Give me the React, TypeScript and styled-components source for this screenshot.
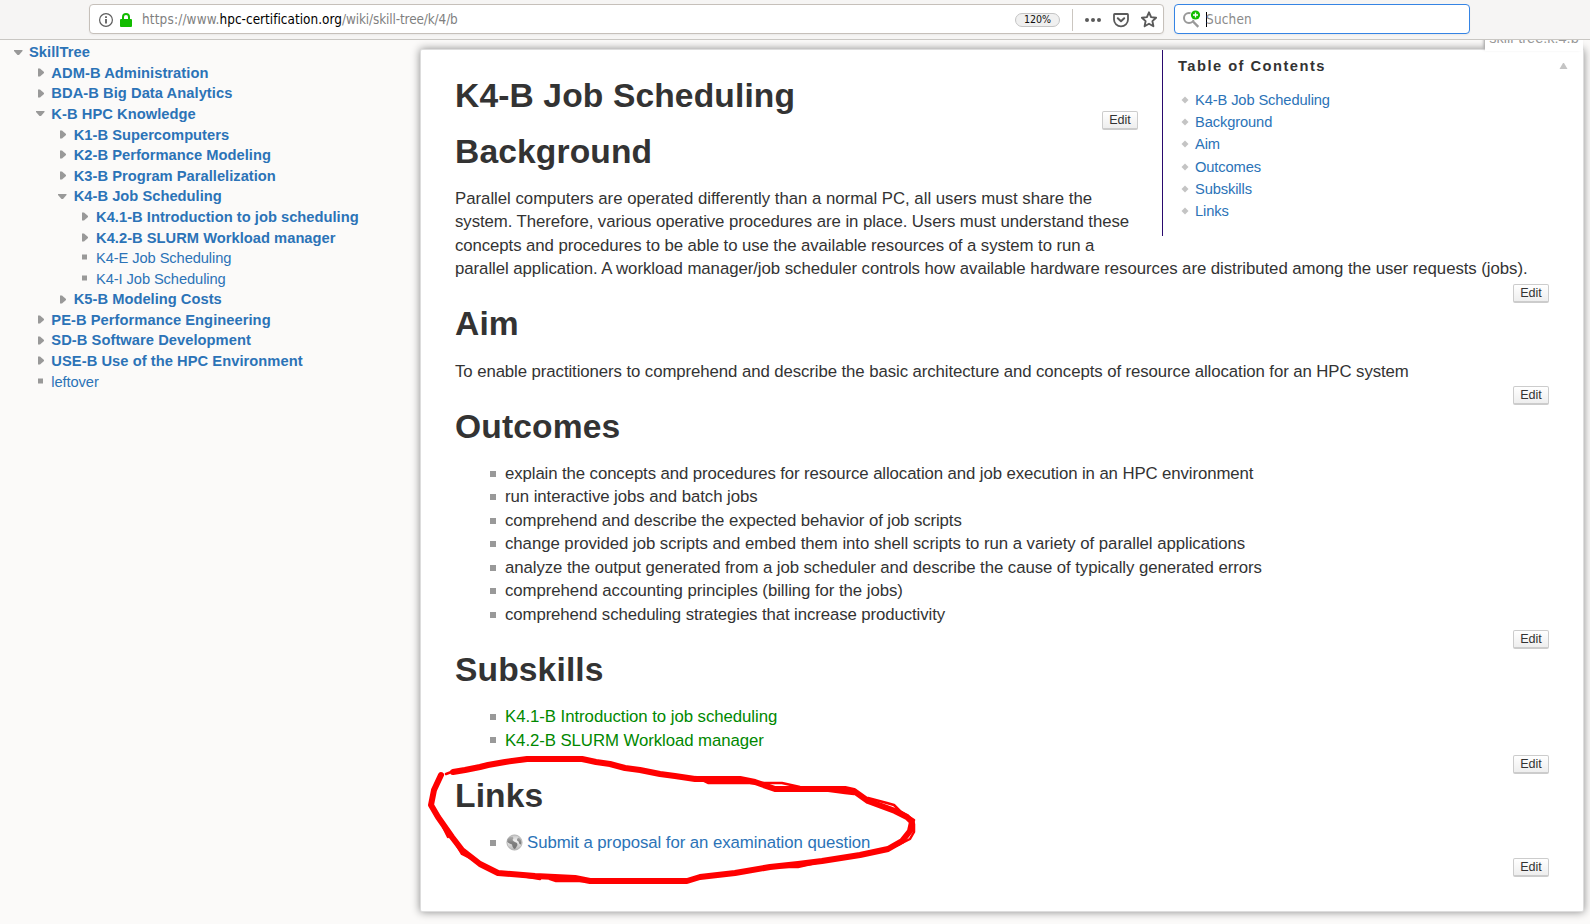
import React from 'react';
import styled, { createGlobalStyle } from 'styled-components';

const Global = createGlobalStyle`
  * { box-sizing: border-box; }
  html, body { margin: 0; height: 924px; overflow: hidden; }
  body { background: #fbfaf9; color: #333; font: 16.8px/23.52px "Liberation Sans", Arial, sans-serif; }
  ul, h1, h2, p { margin: 0; padding: 0; list-style: none; }
  a { color: #2b73b7; text-decoration: none; }
  svg { display: block; flex: none; overflow: visible; }
`;

const Page = styled.div`position: relative; width: 1590px; height: 924px; overflow: hidden;`;

const Toolbar = styled.header`
  position: relative; z-index: 2; display: flex; gap: 10px; height: 40px; padding: 4px 0 0 89px;
  background: #f6f5f4; border-bottom: 1px solid #c9c7c3;
  font: 13.45px/28px "DejaVu Sans Condensed", "DejaVu Sans", sans-serif;
`;
const Field = styled.div<{ $width: number; $focused?: boolean }>`
  display: flex; align-items: center; width: ${p => p.$width}px; height: 30px;
  border: 1px solid ${p => (p.$focused ? '#3584e4' : '#c6c0ba')}; border-radius: 4px; background: #fff;
  padding: 1px 5px 0 9px; box-shadow: 0 1px 2px rgba(0, 0, 0, .05);
`;
const Url = styled.span`
  flex: 1; margin-left: 10px; color: #7f7f7f; white-space: nowrap;
`;
const UrlPart = styled.span<{ $host?: boolean; $track: number }>`
  color: ${p => (p.$host ? '#000' : 'inherit')}; letter-spacing: ${p => p.$track}px;
`;
const Zoom = styled.span`
  width: 45px; height: 14px; border: 1px solid #c4c4c4; border-radius: 7px; background: #f0f0f0;
  color: #111; text-align: center; font-size: 10.6px; line-height: 11px;
`;
const Divider = styled.i`width: 1px; height: 22px; margin: 0 12px; background: #cbc6c0;`;
const Actions = styled.div`display: flex; align-items: center; gap: 11px;`;
const Caret = styled.i`width: 1px; height: 15px; margin-left: 5px; background: #000;`;
const Placeholder = styled.span`margin-left: -1px; color: #8a8a8a; letter-spacing: .2px;`;

const Body = styled.div`display: flex; height: 884px; align-items: flex-start;`;
const Sidebar = styled.nav`
  width: 420px; padding: 2.3px 0 0 14px; font-size: 14.7px; line-height: 20.58px;
`;
const TreeRow = styled.div<{ $level: number; $bold: boolean }>`
  display: flex; align-items: center; height: 20.58px; white-space: nowrap;
  padding-left: ${p => p.$level * 22}px; font-weight: ${p => (p.$bold ? 700 : 400)};
  letter-spacing: ${p => (p.$bold ? (p.$level < 2 ? .05 : .02) : -.1)}px;
`;
const Marker = styled.span<{ $level: number }>`display: flex; width: ${p => 15 + p.$level * .35}px;`;

const Paper = styled.main`
  position: relative; width: 1164px; height: 863px; margin-top: 9px; padding: 0 34px;
  background: #fff; border: 1px solid #ddd; border-radius: 2px; box-shadow: 0 0 8px #888;
`;
const PageId = styled.div`
  position: absolute; right: 0; top: -25px; width: 98px; height: 26px; padding-top: 3px;
  background: #fff; color: #999; text-align: center; font-size: 14.5px; line-height: 20px; white-space: nowrap;
  box-shadow: -2px -1px 3px -1px #999;
`;
const Toc = styled.aside`
  position: relative; float: right; width: 421px; height: 186px; margin: 0 -34px 0 24px; padding: 5px 15px 0 15px;
  border-left: 1px solid #2a0a6e; font-size: 14.7px; line-height: 22.05px;
`;
const TocHead = styled.div`
  display: flex; justify-content: space-between; align-items: center; height: 22px;
  font-weight: 700; letter-spacing: 1.47px;
`;
const TocList = styled.ul`padding: 12px 0 0 3px; letter-spacing: -.12px;`;
const TocItem = styled.li`display: flex; align-items: center; gap: 6px; height: 22.2px;`;

const Heading = styled.h1<{ $top?: number }>`
  padding-top: ${p => p.$top ?? 0}px; font-size: 33.6px; line-height: 40px; font-weight: 700; letter-spacing: .13px;
`;
const Para = styled.p`padding-top: 15.3px; white-space: nowrap;`;
const Line = styled.span<{ $track: number }>`letter-spacing: ${p => p.$track}px;`;
const EditRow = styled.div<{ $lift?: number }>`
  display: flex; justify-content: flex-end; height: 19px; margin: ${p => 3.2 - (p.$lift ?? 0)}px 0 1.2px;
`;
const EditButton = styled.button`
  width: 36px; height: 19px; padding: 0; border: 1px solid #ccc; border-bottom-width: 2px; border-radius: 2px;
  background: linear-gradient(#fff, #eee); color: #333; font: 12.6px/16px "Liberation Sans", Arial, sans-serif;
`;
const List = styled.ul`padding: 15.3px 0 0 34px;`;
const Item = styled.li<{ $track: number }>`
  display: flex; align-items: center; height: 23.52px; white-space: nowrap; letter-spacing: ${p => p.$track}px;
  &::before { content: ''; width: 6px; height: 6px; margin: 0 9px 0 1px; background: #999; }
`;
const WikiLink = styled.a`&& { color: #080; }`;
const External = styled.a`display: flex; align-items: center; gap: 4px; padding-left: 1px;`;
const Scribble = styled.svg`position: absolute; left: 420px; top: 740px; z-index: 3; pointer-events: none;`;

type Kind = 'open' | 'closed' | 'leaf';
const tree: [number, Kind, string][] = [
  [0, 'open', 'SkillTree'],
  [1, 'closed', 'ADM-B Administration'],
  [1, 'closed', 'BDA-B Big Data Analytics'],
  [1, 'open', 'K-B HPC Knowledge'],
  [2, 'closed', 'K1-B Supercomputers'],
  [2, 'closed', 'K2-B Performance Modeling'],
  [2, 'closed', 'K3-B Program Parallelization'],
  [2, 'open', 'K4-B Job Scheduling'],
  [3, 'closed', 'K4.1-B Introduction to job scheduling'],
  [3, 'closed', 'K4.2-B SLURM Workload manager'],
  [3, 'leaf', 'K4-E Job Scheduling'],
  [3, 'leaf', 'K4-I Job Scheduling'],
  [2, 'closed', 'K5-B Modeling Costs'],
  [1, 'closed', 'PE-B Performance Engineering'],
  [1, 'closed', 'SD-B Software Development'],
  [1, 'closed', 'USE-B Use of the HPC Environment'],
  [1, 'leaf', 'leftover'],
];
const markerPath: Record<Kind, string> = {
  open: 'M0 2h8.500v1L5 7H3.500L0 3z',
  closed: 'M2 .5h2L8 4v1L4 8.500H2z',
  leaf: 'M2 1.500h5v5H2z',
};
const outcomes: [string, number][] = [
  ['explain the concepts and procedures for resource allocation and job execution in an HPC environment', -.102],
  ['run interactive jobs and batch jobs', -.06],
  ['comprehend and describe the expected behavior of job scripts', -.1],
  ['change provided job scripts and embed them into shell scripts to run a variety of parallel applications', -.05],
  ['analyze the output generated from a job scheduler and describe the cause of typically generated errors', -.07],
  ['comprehend accounting principles (billing for the jobs)', -.06],
  ['comprehend scheduling strategies that increase productivity', -.1],
];

const Edit = ({ lift }: { lift?: number }) => <EditRow $lift={lift}><EditButton>Edit</EditButton></EditRow>;

const InfoIcon = () => (
  <svg width="14" height="14" viewBox="0 0 14 14" fill="none" stroke="#5e5e5e">
    <circle cx="7" cy="7" r="6.400" strokeWidth="1.200" />
    <path d="M7 6v4.500M7 3.300v1.700" strokeWidth="1.800" />
  </svg>
);
const LockSvg = styled.svg`margin-left: 7px;`;
const LockIcon = () => (
  <LockSvg width="12" height="14" viewBox="0 0 12 14">
    <path d="M3 7V4a3 3 0 0 1 6 0v3" fill="none" stroke="#12bc00" strokeWidth="2" />
    <rect y="6" width="12" height="8" rx="1" fill="#12bc00" />
  </LockSvg>
);
const DotsIcon = () => (
  <svg width="17" height="16" viewBox="0 0 17 16" fill="#5a5a5a">
    <circle cx="2" cy="8" r="2" /><circle cx="8" cy="8" r="2" /><circle cx="14" cy="8" r="2" />
  </svg>
);
const PocketIcon = () => (
  <svg width="17" height="16" viewBox="0 0 17 16" fill="none" stroke="#5a5a5a" strokeWidth="2" strokeLinecap="round" strokeLinejoin="round">
    <path d="M1.700 2h12.600q.7 0 .7.700V7.500a7 6.800 0 0 1-14 0V2.700q0-.7.7-.7z" strokeWidth="1.800" /><path d="M4.800 6.300l3.200 3 3.200-3" />
  </svg>
);
const StarIcon = () => (
  <svg width="17" height="17" viewBox="0 0 17 17" fill="none" stroke="#5a5a5a" strokeWidth="1.900" strokeLinejoin="round">
    <path d="M8 1.300l2.100 4.800 5 .6-3.700 3.400 1 5.200-4.400-2.600-4.400 2.600 1-5.200L.9 6.700l5-.6z" />
  </svg>
);
const SearchIcon = () => (
  <svg width="17" height="18" viewBox="0 0 17 18">
    <circle cx="5" cy="7" r="5" fill="none" stroke="#999" strokeWidth="2" />
    <path d="M9 10.500l5.300 5.300" stroke="#999" strokeWidth="2.400" />
    <circle cx="11.500" cy="4" r="5.300" fill="#fff" />
    <circle cx="11.500" cy="4" r="4.600" fill="#12bc00" />
    <path d="M11.500 1.500v5M9 4h5" stroke="#fff" strokeWidth="1.300" />
  </svg>
);
const GlobeIcon = () => (
  <svg width="17" height="17" viewBox="0 0 17 17">
    <defs>
      <linearGradient id="sea" x1="0" y1="0" x2="0" y2="1">
        <stop offset="0" stopColor="#c4c4c4" /><stop offset=".4" stopColor="#f0f0f0" /><stop offset="1" stopColor="#b4b4b4" />
      </linearGradient>
      <linearGradient id="land" x1="0" y1="0" x2="0" y2="1">
        <stop offset="0" stopColor="#b0b0b0" /><stop offset=".5" stopColor="#808080" /><stop offset="1" stopColor="#747474" />
      </linearGradient>
    </defs>
    <circle cx="8.500" cy="8.500" r="7.600" fill="url(#sea)" stroke="#a8a8a8" strokeWidth=".8" />
    <path d="M1.200 8L1.500 5 4 2.800 6.500 2.500 7.500 4 6.500 6 8 7.500 11 9 11.500 11 9.500 14.500 8 15 6.500 12.500 6 10.500 3.500 9.500zM11 5l1.500-1.500 2 1.500 1 3-.5 2.500-1.500-.5-1-2.500L11 6.500z" fill="url(#land)" />
  </svg>
);

export default function App() {
  return (
    <Page>
      <Global />
      <Toolbar>
        <Field $width={1075}>
          <InfoIcon />
          <LockIcon />
          <Url>
            <UrlPart $track={.16}>https://www.</UrlPart>
            <UrlPart $host $track={0.02}>hpc-certification.org</UrlPart>
            <UrlPart $track={-.12}>/wiki/skill-tree/k/4/b</UrlPart>
          </Url>
          <Zoom>120%</Zoom>
          <Divider />
          <Actions><DotsIcon /><PocketIcon /><StarIcon /></Actions>
        </Field>
        <Field $width={296} $focused>
          <SearchIcon /><Caret /><Placeholder>Suchen</Placeholder>
        </Field>
      </Toolbar>
      <Body>
        <Sidebar>
          {tree.map(([level, kind, label]) => (
            <TreeRow key={label} $level={level} $bold={kind !== 'leaf'}>
              <Marker $level={level}><svg width="10" height="10" viewBox="0 0 10 10" fill="#999"><path d={markerPath[kind]} /></svg></Marker>
              <a>{label}</a>
            </TreeRow>
          ))}
        </Sidebar>
        <Paper>
          <PageId>skill-tree:k:4:b</PageId>
          <Toc>
            <TocHead>
              Table of Contents
              <svg width="9" height="8" viewBox="0 0 9 8" fill="#c4c4c4"><path d="M4 1h1l3.500 6H.5z" /></svg>
            </TocHead>
            <TocList>
              {['K4-B Job Scheduling', 'Background', 'Aim', 'Outcomes', 'Subskills', 'Links'].map(t => (
                <TocItem key={t}>
                  <svg width="8" height="8" viewBox="0 0 8 8" fill="#c4c4c4"><path d="M4 .5L7.500 4 4 7.500.5 4z" /></svg>
                  <a>{t}</a>
                </TocItem>
              ))}
            </TocList>
          </Toc>
          <Heading $top={26}>K4-B Job Scheduling</Heading>
          <Edit lift={7.8} />
          <Heading>Background</Heading>
          <Para>
            <Line $track={-.018}>Parallel computers are operated differently than a normal PC, all users must share the</Line><br />
            <Line $track={-.074}>system. Therefore, various operative procedures are in place. Users must understand these</Line><br />
            <Line $track={-.083}>concepts and procedures to be able to use the available resources of a system to run a</Line><br />
            <Line $track={-.053}>parallel application. A workload manager/job scheduler controls how available hardware resources are distributed among the user requests (jobs).</Line>
          </Para>
          <Edit />
          <Heading>Aim</Heading>
          <Para>
            <Line $track={-.085}>To enable practitioners to comprehend and describe the basic architecture and concepts of resource allocation for an HPC system</Line>
          </Para>
          <Edit />
          <Heading>Outcomes</Heading>
          <List>{outcomes.map(([t, track]) => <Item key={t} $track={track}>{t}</Item>)}</List>
          <Edit />
          <Heading>Subskills</Heading>
          <List>
            <Item $track={-.055}><WikiLink>K4.1-B Introduction to job scheduling</WikiLink></Item>
            <Item $track={-.07}><WikiLink>K4.2-B SLURM Workload manager</WikiLink></Item>
          </List>
          <Edit />
          <Heading>Links</Heading>
          <List>
            <Item $track={-.06}><External><GlobeIcon />Submit a proposal for an examination question</External></Item>
          </List>
          <Edit />
        </Paper>
      </Body>
      <Scribble width="510" height="150" viewBox="0 0 510 150" fill="none" stroke="#f00" strokeLinecap="round" strokeLinejoin="round">
        <path strokeWidth="6" d="M33 32L45 30 60 27 68 25 85 22 107 19H162L176 22 190 24 205 28 220 30 240 34 255 36 275 39 295 39H320L335 42 355 49H425L434 51 448 61 475 71 487 77 492 82 490 91 482 101 468 109 440 115 402 121 378 124 350 127 315 133 280 137 267 141H170L155 138 115 136 78 133 60 124 42 110 32 97 18 77 11 65 14 50 21 35" />
        <path strokeWidth="2.500" d="M26 34L34 31M276 37L288 43H335M335 43H362L380 47 425 53 434 54M448 58L467 63 474 65 480 71 494 80M494 84L494 92 490 99 480 104 468 109M400 122L378 127 355 127M170 141H136L130 139M120 139L90 134M64 125L42 114 36 104M28 97L23 87" />
      </Scribble>
    </Page>
  );
}
